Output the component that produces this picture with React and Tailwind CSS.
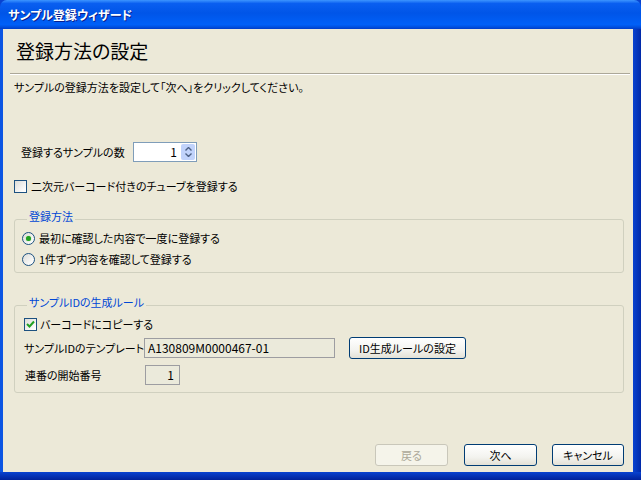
const jp = "font-['MS_UI_Gothic','Noto_Sans_CJK_JP',sans-serif] [font-feature-settings:'palt']"

// XP style push button
const XpButton = ({ children, disabled, className = '' }) => (
  <button
    disabled={disabled}
    className={`h-[22px] whitespace-nowrap rounded-[3px] border text-[11px] leading-[16px] ${
      disabled
        ? 'border-[#C9C7BA] bg-[#F5F4EA] text-[#ACA899]'
        : 'border-[#003C74] bg-[linear-gradient(to_bottom,#FFFFFF_0%,#F3F3EF_60%,#E3E1D6_100%)] text-black'
    } ${className}`}
  >
    {children}
  </button>
)

const Checkbox = ({ checked }) => (
  <span className="flex h-[13px] w-[13px] shrink-0 items-center justify-center border border-[#1C5180] bg-[linear-gradient(135deg,#DCDCD7_0%,#FFFFFF_90%)]">
    {checked && (
      <svg width="9" height="9" viewBox="0 0 9 9">
        <path d="M1 4 L3.5 6.5 L8 1.5" stroke="#21A121" strokeWidth="2" fill="none" />
      </svg>
    )}
  </span>
)

const Radio = ({ checked }) => (
  <span className="flex h-[13px] w-[13px] shrink-0 items-center justify-center rounded-full border border-[#1C5180] bg-[linear-gradient(135deg,#DCDCD7_0%,#FFFFFF_90%)]">
    {checked && <span className="h-[5px] w-[5px] rounded-full bg-[#21A121] shadow-[0_0_1px_#5BC85B]" />}
  </span>
)

const GroupBox = ({ title, children, className = '' }) => (
  <fieldset className={`ml-[11px] w-[610px] rounded-[3px] border border-[#D0D0BF] pl-[6px] ${className}`}>
    <legend className="ml-[6px] px-[2px] pb-[6px] text-[11px] leading-[16px] text-[#0046D5]">{title}</legend>
    {children}
  </fieldset>
)

export default function App() {
  return (
    <div className={`flex h-[480px] w-[641px] flex-col bg-[#0842D0] ${jp}`}>

      {/* title bar */}
      <div className="flex h-[29px] shrink-0 items-center rounded-t-[7px] bg-[linear-gradient(to_bottom,#3D95FF_0%,#0A5FF0_12%,#0055E8_45%,#0060F8_85%,#0050E0_93%,#003DC8_100%)] pl-[8px]">
        <span className="text-[12px] font-bold leading-[16px] text-white [text-shadow:1px_1px_#0A1E8C]">
          サンプル登録ウィザード
        </span>
      </div>

      <div className="flex flex-1 bg-[linear-gradient(to_right,#0B55E3_0px,#0B55E3_3px,transparent_3px)]">
        <div className="ml-[3px] flex flex-1 flex-col whitespace-nowrap bg-[#ECE9D8] text-[11px] leading-[16px] text-black">

          {/* header */}
          <div className="mt-[10px] pl-[13px] text-[19px] leading-[24px]">登録方法の設定</div>
          <div className="ml-[7px] mr-[3px] mt-[10px] h-[2px] border-t border-[#ACA899] border-b-white border-b" />
          <div className="mt-[4px] pl-[11px]">サンプルの登録方法を設定して「次へ」をクリックしてください。</div>

          {/* count */}
          <div className="mt-[47px] flex items-center">
            <span className="w-[130px] pl-[18px]">登録するサンプルの数</span>
            <div className="flex h-[20px] w-[64px] items-center border border-[#7F9DB9] bg-white">
              <span className="flex-1 pr-[4px] text-right text-[12px]">1</span>
              <div className="mr-[1px] flex h-[16px] w-[14px] flex-col items-center justify-center gap-[2px] rounded-[2px] bg-[#C1D3FB]">
                <svg width="7" height="4" viewBox="0 0 7 4"><path d="M0.5 3.5 L3.5 0.5 L6.5 3.5" stroke="#4D6185" strokeWidth="1.4" fill="none" /></svg>
                <svg width="7" height="4" viewBox="0 0 7 4"><path d="M0.5 0.5 L3.5 3.5 L6.5 0.5" stroke="#4D6185" strokeWidth="1.4" fill="none" /></svg>
              </div>
            </div>
          </div>

          <div className="mt-[16px] flex items-center gap-[4px] pl-[11px]">
            <Checkbox />
            <span>二次元バーコード付きのチューブを登録する</span>
          </div>

          {/* registration method */}
          <GroupBox title="登録方法" className="mt-[14px] pb-[5px]">
            <div className="flex items-center gap-[4px] pl-[1px]">
              <Radio checked />
              <span>最初に確認した内容で一度に登録する</span>
            </div>
            <div className="mt-[5px] flex items-center gap-[4px] pl-[1px]">
              <Radio />
              <span>1件ずつ内容を確認して登録する</span>
            </div>
          </GroupBox>

          {/* ID rule */}
          <GroupBox title="サンプルIDの生成ルール" className="mt-[21px] pb-[7px]">
            <div className="flex items-center gap-[3px] pl-[3px]">
              <Checkbox checked />
              <span>バーコードにコピーする</span>
            </div>
            <div className="mt-[5px] flex items-center">
              <span className="w-[123px] pl-[3px]">サンプルIDのテンプレート</span>
              <div className="flex h-[20px] w-[191px] items-center border border-[#9D9DA1] bg-[#EBEADB] pl-[3px] text-[12px]">
                A130809M0000467-01
              </div>
              <XpButton className="ml-[14px] w-[117px]">ID生成ルールの設定</XpButton>
            </div>
            <div className="mt-[6px] flex items-center">
              <span className="w-[124px] pl-[4px]">連番の開始番号</span>
              <div className="flex h-[20px] w-[35px] items-center justify-end border border-[#9D9DA1] bg-[#EBEADB] pr-[5px] text-[12px]">
                1
              </div>
            </div>
          </GroupBox>

          {/* footer buttons */}
          <div className="mt-auto flex justify-end pb-[6px] pr-[9px]">
            <XpButton disabled className="w-[73px]">戻る</XpButton>
            <XpButton className="ml-[16px] w-[73px]">次へ</XpButton>
            <XpButton className="ml-[15px] w-[72px]">キャンセル</XpButton>
          </div>
        </div>
        <div className="w-[8px] bg-[linear-gradient(to_right,#0842D0,#0029A8)]" />
      </div>
      <div className="h-[8px] shrink-0 bg-[linear-gradient(to_bottom,#0842D0,#00219A)]" />
    </div>
  )
}
